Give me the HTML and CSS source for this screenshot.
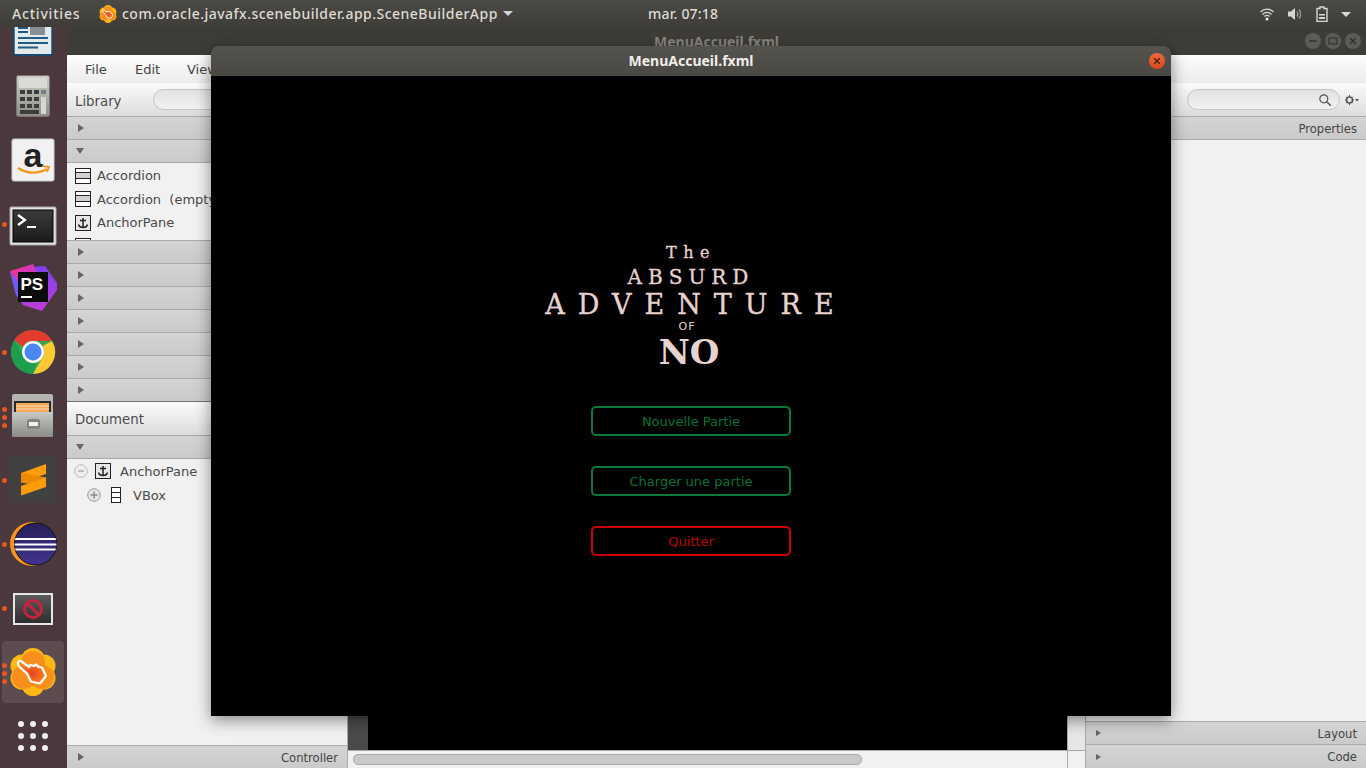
FILE: index.html
```html
<!DOCTYPE html>
<html lang="fr">
<head>
<meta charset="utf-8">
<title>MenuAccueil.fxml</title>
<link rel="stylesheet" href="styles.css">
</head>
<body>
<svg class="defs" width="0" height="0" aria-hidden="true">
  <defs>
    <radialGradient id="g-hand" cx=".5" cy=".55" r=".55"><stop offset="0" stop-color="#e8431f"/><stop offset="1" stop-color="#f98a1e"/></radialGradient>
    <symbol id="i-accordion" viewBox="0 0 16 16">
      <rect x=".5" y=".5" width="15" height="15" fill="#fff" stroke="#222"/>
      <rect x="1" y="5" width="14" height="6" fill="#d2d2d2"/>
      <path d="M1 4.500h14M1 10.500h14" stroke="#222" fill="none"/>
    </symbol>
    <symbol id="i-anchor" viewBox="0 0 16 16">
      <rect x=".5" y=".5" width="15" height="15" fill="#e6e6e6" stroke="#222"/>
      <path d="M8 3v9.500M5 5.500h6M3.500 9.500c.5 2 2.500 3 4.500 3s4-1 4.500-3" stroke="#222" stroke-width="1.500" fill="none"/>
    </symbol>
    <symbol id="i-vbox" viewBox="0 0 16 16">
      <rect x="3.500" y=".5" width="9" height="15" fill="#fff" stroke="#222"/>
      <path d="M3.500 5.500h9M3.500 10.500h9" stroke="#222" fill="none"/>
    </symbol>
    <symbol id="i-app" viewBox="0 0 48 48">
      <g fill="#fdb813">
        <circle cx="24" cy="11.500" r="11.500"/><circle cx="35" cy="18" r="11.500"/><circle cx="35" cy="30" r="11.500"/>
        <circle cx="24" cy="36.500" r="11.500"/><circle cx="13" cy="30" r="11.500"/><circle cx="13" cy="18" r="11.500"/>
      </g>
      <g fill="#f57c1f" fill-opacity=".7">
        <circle cx="24" cy="15" r="12"/><circle cx="33" cy="29" r="12"/><circle cx="15" cy="29" r="12"/>
      </g>
      <path d="M9 15.500Q9 12.500 12 13L20 19 21 17 25 18 26.500 16.500 30 19 33 19.500 37 28 31 35.500 22 33.500 18 25.500 10 18.500Z" fill="url(#g-hand)" stroke="#fff" stroke-width="2.200" stroke-linejoin="round"/>
    </symbol>
  </defs>
</svg>

<div class="desktop">
  <section class="window">
    <header class="win-title">
      <span class="win-name">MenuAccueil.fxml</span>
      <div class="win-controls">
        <span class="win-btn"><svg width="16" height="16" viewBox="0 0 16 16"><path d="M4 8h8" stroke="#2e2d2a" stroke-width="1.200"/></svg></span>
        <span class="win-btn"><svg width="16" height="16" viewBox="0 0 16 16"><rect x="4" y="5" width="8" height="6" fill="none" stroke="#2e2d2a"/></svg></span>
        <span class="win-btn"><svg width="16" height="16" viewBox="0 0 16 16"><path d="M5 5l6 6M11 5l-6 6" stroke="#2e2d2a" stroke-width="1.200"/></svg></span>
      </div>
    </header>
    <nav class="menu">
      <span class="menu-file">File</span><span class="menu-edit">Edit</span><span>View</span>
    </nav>
    <div class="work">
      <aside class="left">
        <div class="panel-head"><span class="panel-label panel-label-lib">Library</span><span class="search search-left"></span></div>
        <div class="band"><i class="tri-r"></i></div>
        <div class="band"><i class="tri-d"></i></div>
        <ul class="lib-list">
          <li><svg class="ico"><use href="#i-accordion"/></svg>Accordion</li>
          <li><svg class="ico"><use href="#i-accordion"/></svg>Accordion&nbsp; (empty)</li>
          <li><svg class="ico"><use href="#i-anchor"/></svg>AnchorPane</li>
          <li><svg class="ico"><use href="#i-accordion"/></svg>&nbsp;</li>
        </ul>
        <div class="band"><i class="tri-r"></i></div>
        <div class="band"><i class="tri-r"></i></div>
        <div class="band"><i class="tri-r"></i></div>
        <div class="band"><i class="tri-r"></i></div>
        <div class="band"><i class="tri-r"></i></div>
        <div class="band"><i class="tri-r"></i></div>
        <div class="band band-last"><i class="tri-r"></i></div>
        <div class="panel-head"><span class="panel-label">Document</span></div>
        <div class="band"><i class="tri-d"></i></div>
        <div class="tree">
          <div class="tree-row">
            <svg class="toggle" width="14" height="14" viewBox="0 0 14 14"><circle cx="7" cy="7" r="6.300" fill="#eee" stroke="#bbb"/><path d="M4 7h6" stroke="#aaa" stroke-width="1.400"/></svg>
            <svg class="ico"><use href="#i-anchor"/></svg>AnchorPane
          </div>
          <div class="tree-row tree-child">
            <svg class="toggle" width="14" height="14" viewBox="0 0 14 14"><circle cx="7" cy="7" r="6.300" fill="#e6e6e6" stroke="#999"/><path d="M3.500 7h7M7 3.500v7" stroke="#888" stroke-width="1.400"/></svg>
            <svg class="ico"><use href="#i-vbox"/></svg>VBox
          </div>
        </div>
        <div class="band band-foot"><i class="tri-r"></i><span class="band-text">Controller</span></div>
      </aside>

      <main class="center">
        <div class="stage">
          <div class="stage-side"></div>
          <div class="stage-black"></div>
          <div class="stage-end"></div>
        </div>
        <div class="scrollbar"><span class="thumb"></span><span class="corner"></span></div>
      </main>

      <aside class="right">
        <div class="panel-head panel-head-right">
          <span class="search search-right">
            <svg width="14" height="14" viewBox="0 0 14 14"><circle cx="5.800" cy="5.800" r="4" fill="none" stroke="#555" stroke-width="1.200"/><path d="M8.800 8.800l4 4" stroke="#555" stroke-width="1.500"/></svg>
          </span>
          <svg class="gear" width="14" height="10" viewBox="0 0 14 10"><circle cx="4.500" cy="5" r="3" fill="none" stroke="#555" stroke-width="1.600"/><path d="M4.500 0v2M4.500 8v2M0 5h2M7 5h2M1.300 1.800l1.300 1.300M6.400 6.900l1.300 1.300M7.700 1.800L6.400 3.100M2.600 6.900L1.300 8.200" stroke="#555"/><path d="M10 4h4l-2 2.500z" fill="#555"/></svg>
        </div>
        <div class="band band-right"><span class="band-text">Properties</span></div>
        <div class="right-body"></div>
        <div class="band band-right"><i class="tri-r"></i><span class="band-text">Layout</span></div>
        <div class="band band-right band-foot-r"><i class="tri-r"></i><span class="band-text">Code</span></div>
      </aside>
    </div>
  </section>

  <nav class="dock">
    <div class="dock-item">
      <svg width="48" height="48" viewBox="0 0 48 48"><rect x="4.800" y="1" width="38.400" height="46" rx="1" fill="#e4e9ec" stroke="#174a6e" stroke-width="1.800"/><path d="M9 20h10M9 24h10M9 30h30M9 35h30M9 39.500h20" stroke="#1f5b86" stroke-width="1.800"/><rect x="21" y="10" width="15" height="17" fill="#868e98"/></svg>
    </div>
    <div class="dock-item">
      <svg width="48" height="48" viewBox="0 0 48 48"><defs><linearGradient id="g-calc" x1="0" y1="0" x2="0" y2="1"><stop offset="0" stop-color="#cfcfc9"/><stop offset="1" stop-color="#8d8d88"/></linearGradient></defs><rect x="7.500" y="3.500" width="33" height="41" rx="2" fill="url(#g-calc)" stroke="#777"/><rect x="10" y="6" width="28" height="10" fill="#d9dcd4"/><g fill="#3d3d3b"><rect x="11" y="18" width="5" height="4"/><rect x="18" y="18" width="5" height="4"/><rect x="25" y="18" width="5" height="4"/><rect x="11" y="25" width="5" height="4"/><rect x="18" y="25" width="5" height="4"/><rect x="25" y="25" width="5" height="4"/><rect x="11" y="32" width="5" height="4"/><rect x="18" y="32" width="5" height="4"/><rect x="25" y="32" width="5" height="4"/><rect x="11" y="38" width="19" height="4"/></g><rect x="32" y="18" width="5" height="4" fill="#6f7f85"/><rect x="32" y="25" width="5" height="17" fill="#d5d8d2"/></svg>
    </div>
    <div class="dock-item">
      <svg width="48" height="48" viewBox="0 0 48 48"><rect x="3" y="3" width="42" height="42" rx="2" fill="#f1f1f1" stroke="#ccc"/><text x="24" y="31" text-anchor="middle" class="amazon-a">a</text><path d="M9 32c9 6 20 6 29 1" fill="none" stroke="#f7981d" stroke-width="2.400"/><path d="M34 30l6 1-2 5" fill="none" stroke="#f7981d" stroke-width="1.800"/></svg>
    </div>
    <div class="dock-item">
      <i class="pip pip-1"></i>
      <svg width="48" height="48" viewBox="0 0 48 48"><defs><linearGradient id="g-term" x1="0" y1="0" x2="0" y2="1"><stop offset="0" stop-color="#3b3b3b"/><stop offset="1" stop-color="#1b1b1b"/></linearGradient></defs><rect x="1" y="7" width="46" height="38" rx="1" fill="#e2e2e2" stroke="#aaa"/><rect x="4" y="10" width="40" height="32" fill="url(#g-term)" stroke="#000"/><path d="M9 15l7 5-7 5" fill="none" stroke="#fff" stroke-width="2.200"/><path d="M18 27h9" stroke="#fff" stroke-width="2"/></svg>
    </div>
    <div class="dock-item">
      <svg width="48" height="48" viewBox="0 0 48 48"><defs><linearGradient id="g-ps" x1="0" y1="0" x2="1" y2="1"><stop offset="0" stop-color="#f5338e"/><stop offset="1" stop-color="#a63cf2"/></linearGradient><linearGradient id="g-ps2" x1="0" y1="0" x2="0" y2="1"><stop offset="0" stop-color="#7b3ff2"/><stop offset="1" stop-color="#c23bd8"/></linearGradient></defs><path d="M22 3L36 2 48 19 48 26 33 47 14 41z" fill="url(#g-ps2)"/><path d="M1 7L24 0 30 12 14 41 7 31z" fill="url(#g-ps)"/><path d="M1 7L7 31 14 41 12 22z" fill="#6d5cf5"/><rect x="9" y="8" width="30" height="30" fill="#0c0c0c"/><text x="11.500" y="26" class="ps-text">PS</text><rect x="12" y="32" width="11" height="2" fill="#fff"/></svg>
    </div>
    <div class="dock-item">
      <i class="pip pip-1"></i>
      <svg width="48" height="48" viewBox="0 0 48 48"><circle cx="24" cy="24" r="22" fill="#34a853"/><path d="M24 2a22 22 0 0 1 19.100 11H24a11 11 0 0 0-10 6L5.500 12A22 22 0 0 1 24 2z" fill="#e33b2e"/><path d="M43.100 13A22 22 0 0 1 24 46l9.500-16.500A11 11 0 0 0 33.500 18z" fill="#fdc933"/><path d="M24 46a22 22 0 0 1-18.500-34l9.500 16.500a11 11 0 0 0 12 6z" fill="#1e9e4c"/><circle cx="24" cy="24" r="11" fill="#fff"/><circle cx="24" cy="24" r="8.500" fill="#4a87f0"/></svg>
    </div>
    <div class="dock-item">
      <i class="pip pip-3a"></i><i class="pip pip-3b"></i><i class="pip pip-3c"></i>
      <svg width="48" height="48" viewBox="0 0 48 48"><defs><linearGradient id="g-fc" x1="0" y1="0" x2="0" y2="1"><stop offset="0" stop-color="#c8c8c4"/><stop offset="1" stop-color="#8a8a86"/></linearGradient></defs><rect x="3" y="2" width="41" height="42" rx="2" fill="#b4b4b0"/><rect x="5" y="9" width="37" height="12" fill="#2a2a28"/><rect x="7" y="11" width="33" height="10" fill="#f2a65a"/><path d="M7 14h33M7 17h33" stroke="#fbe2bd"/><rect x="3" y="20" width="41" height="25" rx="1" fill="url(#g-fc)"/><rect x="18" y="27" width="13" height="10" rx="2" fill="#83837f"/><rect x="20" y="30" width="9" height="4" fill="#f0f0ee"/></svg>
    </div>
    <div class="dock-item">
      <i class="pip pip-1"></i>
      <svg width="48" height="48" viewBox="0 0 48 48"><rect width="48" height="47" rx="4" fill="#414141"/><path d="M12 17L37 8V18L12 26.500Z" fill="#ff9c0a"/><path d="M12 17V26.500L37 31V21.500Z" fill="#ef8a00"/><path d="M37 21.500V31L12 39.500V30Z" fill="#ff9c0a"/></svg>
    </div>
    <div class="dock-item">
      <i class="pip pip-1"></i>
      <svg width="48" height="48" viewBox="0 0 48 48"><defs><linearGradient id="g-ec" x1="0" y1="0" x2="0" y2="1"><stop offset="0" stop-color="#272056"/><stop offset="1" stop-color="#40348f"/></linearGradient><clipPath id="c-ec"><circle cx="26.500" cy="24" r="21"/></clipPath></defs><circle cx="23" cy="24" r="22" fill="#f7941e"/><circle cx="26.500" cy="24" r="21" fill="url(#g-ec)" stroke="#111"/><path d="M4 19h44M4 24.500h44M4 29.500h44" stroke="#fff" stroke-width="2" clip-path="url(#c-ec)"/></svg>
    </div>
    <div class="dock-item">
      <i class="pip pip-1"></i>
      <svg width="48" height="48" viewBox="0 0 48 48"><defs><linearGradient id="g-no" x1="0" y1="0" x2="0" y2="1"><stop offset="0" stop-color="#5c5c5c"/><stop offset="1" stop-color="#2c2c2c"/></linearGradient></defs><rect x="5" y="10" width="38" height="30" fill="url(#g-no)" stroke="#e6e6e6" stroke-width="2"/><circle cx="24" cy="25" r="8.500" fill="none" stroke="#c3243f" stroke-width="3"/><path d="M18 19l12 12" stroke="#c3243f" stroke-width="3"/></svg>
    </div>
    <div class="dock-item dock-active">
      <i class="pip pip-3a"></i><i class="pip pip-3b"></i><i class="pip pip-3c"></i>
      <svg width="48" height="48"><use href="#i-app"/></svg>
    </div>
    <div class="dock-item">
      <div class="dots"><i></i><i></i><i></i><i></i><i></i><i></i><i></i><i></i><i></i></div>
    </div>
  </nav>

  <header class="topbar">
    <span class="activities">Activities</span>
    <svg class="app-icon" width="18" height="18"><use href="#i-app"/></svg>
    <span class="app-name">com.oracle.javafx.scenebuilder.app.SceneBuilderApp</span>
    <i class="caret"></i>
    <span class="clock">mar. 07:18</span>
    <div class="tray">
      <svg width="16" height="16" viewBox="0 0 16 16"><path d="M1.500 6a9 9 0 0 1 13 0M3.500 8.500a6 6 0 0 1 9 0M5.500 10.500a3.500 3.500 0 0 1 5 0" fill="none" stroke="#d8d6d2" stroke-width="1.300"/><circle cx="8" cy="13" r="1.500" fill="#eee"/></svg>
      <svg width="16" height="16" viewBox="0 0 16 16"><path d="M1 5.500h3L8 2v12L4 10.500H1z" fill="#d8d6d2"/><path d="M10 5.500a4 4 0 0 1 0 5M12 3.500a7 7 0 0 1 0 9" fill="none" stroke="#a8a6a2" stroke-width="1.200"/></svg>
      <svg width="14" height="16" viewBox="0 0 14 16"><path d="M5 1h4v1.500h3v13H2v-13h3z" fill="none" stroke="#d8d6d2" stroke-width="1.400"/><path d="M4 8h6v1.500H4zM4 11h6v2H4z" fill="#d8d6d2"/></svg>
      <i class="caret"></i>
    </div>
  </header>

  <section class="dialog">
    <header class="dialog-title">
      <span>MenuAccueil.fxml</span>
      <span class="dialog-close"><svg width="16" height="16" viewBox="0 0 16 16"><path d="M5.200 5.200l5.600 5.600M10.800 5.200l-5.600 5.600" stroke="#3c2018" stroke-width="1.300"/></svg></span>
    </header>
    <div class="game">
      <h1 class="logo">
        <span class="l-the">The</span>
        <span class="l-absurd">ABSURD</span>
        <span class="l-adventure">ADVENTURE</span>
        <span class="l-of">OF</span>
        <span class="l-no">NO</span>
      </h1>
      <button class="game-btn">Nouvelle Partie</button>
      <button class="game-btn">Charger une partie</button>
      <button class="game-btn game-btn-red">Quitter</button>
    </div>
  </section>
</div>
</body>
</html>
```
FILE: styles.css
```css
* { box-sizing: border-box; }
html, body { margin: 0; padding: 0; height: 100%; overflow: hidden; background: #3c3b37; }
.defs { position: absolute; }
.desktop { position: relative; width: 1366px; height: 768px; overflow: hidden; font-family: "DejaVu Sans", sans-serif; font-size: 13px; color: #4a4a4a; }

/* top bar */
.topbar { position: absolute; left: 0; top: 0; width: 1366px; height: 27px; display: flex; align-items: center; background: linear-gradient(#4b4a45, #3e3d39); color: #dfdbd2; font-family: "Noto Sans", sans-serif; font-size: 14px; font-weight: 500; }
.activities { margin-left: 12px; width: 87px; letter-spacing: .8px; }
.app-icon { flex: none; }
.app-name { margin-left: 5px; width: 381px; white-space: nowrap; letter-spacing: .48px; }
.caret { display: block; width: 0; height: 0; border-left: 5px solid transparent; border-right: 5px solid transparent; border-top: 5px solid #d8d6d2; }
.clock { margin-left: 135px; width: 500px; letter-spacing: .2px; }
.tray { position: absolute; right: 15px; top: 6px; display: flex; align-items: center; gap: 12px; }

/* scene builder window */
.window { position: absolute; left: 67px; top: 27px; width: 1299px; height: 741px; display: flex; flex-direction: column; background: #f1f1f1; }
.win-title { flex: none; height: 28px; position: relative; background: #3d3c37; display: flex; align-items: center; justify-content: center; }
.win-name { color: #87857f; font-family: "Noto Sans", sans-serif; font-weight: 700; font-size: 14px; }
.win-controls { position: absolute; right: 5px; top: 6px; display: flex; gap: 4px; }
.win-btn { width: 16px; height: 16px; border-radius: 50%; background: #5d5b55; display: block; }
.menu { flex: none; height: 28px; display: flex; align-items: center; padding: 1px 0 0 18px; background: linear-gradient(#fdfdfd, #ececec); color: #444; }
.menu-file { width: 50px; }
.menu-edit { width: 52px; }
.work { flex: 1; display: flex; min-height: 0; }
.left { flex: none; width: 281px; display: flex; flex-direction: column; border-right: 1px solid #aaa; }
.panel-head { flex: none; height: 34px; display: flex; align-items: center; padding-left: 8px; background: linear-gradient(#fbfbfb, #dcdcdc); border-bottom: 1px solid #a9a9a9; }
.panel-label { color: #4a4a4a; width: 78px; font-size: 13.300px; padding-top: 2px; }
.panel-label-lib { padding-top: 4px; }
.search { display: flex; align-items: center; justify-content: flex-end; height: 21px; border: 1px solid #c4c4c4; border-radius: 11px; background: linear-gradient(#e2e2e2, #f2f2f2); }
.search-left { width: 180px; }
.search-right { width: 153px; padding-right: 7px; }
.band { flex: none; height: 23px; display: flex; align-items: center; padding-left: 9px; background: linear-gradient(#d4d4d4, #cacaca); border-bottom: 1px solid #a9a9a9; color: #444; }
.band-text { font-size: 11.600px; padding-top: 1px; }
.band-last { border-bottom-color: #707070; }
.tri-r { display: block; width: 0; height: 0; border-top: 4px solid transparent; border-bottom: 4px solid transparent; border-left: 6px solid #666; margin-left: 2px; }
.tri-d { display: block; width: 0; height: 0; border-left: 4px solid transparent; border-right: 4px solid transparent; border-top: 6px solid #666; }
.lib-list { flex: none; height: 78px; margin: 0; padding: 1px 0 0 8px; list-style: none; overflow: hidden; background: #f1f1f1; border-bottom: 1px solid #a9a9a9; }
.lib-list li { height: 23.500px; display: flex; align-items: center; gap: 6px; white-space: nowrap; }
.ico { width: 16px; height: 16px; flex: none; }
.tree { flex: 1; padding: 0 0 0 7px; background: #f1f1f1; }
.tree-row { height: 24px; display: flex; align-items: center; }
.tree-row .toggle { flex: none; margin-right: 7px; }
.tree-row .ico { margin-right: 9px; }
.tree-child { padding-left: 13px; }
.tree-child .toggle { margin-right: 7px; }
.band-foot { height: 23px; border-bottom: 0; border-top: 1px solid #a9a9a9; justify-content: space-between; padding-right: 9px; }

.center { flex: 1; min-width: 0; display: flex; flex-direction: column; }
.stage { flex: 1; display: flex; min-height: 0; }
.stage-side { flex: none; width: 20px; background: #4a4a4a; }
.stage-black { flex: 1; background: #000; }
.stage-end { flex: none; width: 18px; background: #e6e6e6; border-left: 1px solid #aaa; }
.scrollbar { flex: none; height: 18px; display: flex; align-items: center; justify-content: space-between; padding-left: 5px; background: #f1f1f1; border-top: 1px solid #aaa; }
.thumb { display: block; width: 509px; height: 11px; border-radius: 5px; background: #c9c9c9; border: 1px solid #aaa; }
.corner { display: block; width: 18px; height: 18px; border-left: 1px solid #aaa; }

.right { flex: none; width: 281px; display: flex; flex-direction: column; border-left: 1px solid #aaa; }
.panel-head-right { padding-left: 101px; gap: 5px; }
.gear { flex: none; }
.band-right { justify-content: flex-end; padding-right: 9px; padding-left: 8px; position: relative; }
.band-right .tri-r { margin-right: auto; border-top-width: 3px; border-bottom-width: 3px; border-left-width: 5px; }
.right-body { flex: 1; background: #f1f1f1; border-bottom: 1px solid #a9a9a9; }
.band-foot-r { border-bottom: 0; }

/* dock */
.dock { position: absolute; left: 0; top: 0; width: 67px; height: 768px; background: #4a383c; display: flex; flex-direction: column; }
.dock-item { flex: none; width: 66px; height: 64px; display: flex; align-items: center; justify-content: center; position: relative; }
.dock-item > svg { display: block; }
.dock-active::before { content: ""; position: absolute; left: 2px; top: 1px; width: 62px; height: 62px; border-radius: 4px; background: rgba(255, 255, 255, .1); }
.dock-active > svg { position: relative; }
.pip { position: absolute; left: 2px; width: 5px; height: 5px; border-radius: 50%; background: #e9561f; z-index: 1; }
.pip-1 { top: 30px; }
.pip-3a { top: 23px; }
.pip-3b { top: 31px; }
.pip-3c { top: 39px; }
.dots { width: 30px; display: grid; grid-template-columns: repeat(3, 6px); justify-content: space-between; row-gap: 6px; }
.dots i { display: block; width: 6px; height: 6px; border-radius: 50%; background: #eee; }
.amazon-a { font-family: "Liberation Sans", sans-serif; font-weight: 700; font-size: 34px; fill: #222; }
.ps-text { font-family: "Liberation Sans", sans-serif; font-weight: 700; font-size: 17px; fill: #fff; }

/* dialog */
.dialog { position: absolute; left: 211px; top: 46px; width: 960px; height: 670px; display: flex; flex-direction: column; background: #000; border-radius: 7px 7px 0 0; box-shadow: 0 4px 16px rgba(0, 0, 0, .45); }
.dialog-title { flex: none; height: 30px; padding-bottom: 1px; position: relative; display: flex; align-items: center; justify-content: center; border-radius: 7px 7px 0 0; background: linear-gradient(#55534d, #4a4843); color: #f0eeea; font-family: "Noto Sans", sans-serif; font-weight: 700; font-size: 14px; }
.dialog-close { position: absolute; right: 6px; top: 7px; width: 16px; height: 16px; border-radius: 50%; background: linear-gradient(#f0693a, #d94a1c); display: block; }
.game { flex: 1; display: flex; flex-direction: column; align-items: center; padding-top: 165px; gap: 30px; }
.logo { margin: 0 0 5px; display: flex; flex-direction: column; align-items: center; font-family: "DejaVu Serif", serif; font-weight: 400; color: #e6d3d0; white-space: nowrap; height: 130px; -webkit-text-stroke: .35px #e6d3d0; }
.logo span { display: block; }
.l-the { font-size: 16px; letter-spacing: 6.500px; line-height: 24px; height: 24px; }
.l-absurd { font-size: 20px; letter-spacing: 6px; line-height: 24px; height: 24px; }
.l-adventure { font-size: 27px; letter-spacing: 13px; line-height: 32px; height: 32px; margin-right: -10px; }
.l-of { font-family: "DejaVu Sans", sans-serif; font-size: 11px; font-weight: 400; line-height: 12px; height: 12px; letter-spacing: 1px; margin-right: 8px; -webkit-text-stroke: 0; }
.l-no { font-size: 34px; font-weight: 700; line-height: 38px; height: 38px; margin-right: 4px; -webkit-text-stroke: 0; }
.game-btn { display: block; width: 200px; height: 30px; padding: 0; border: 2px solid #0a7a3a; border-radius: 5px; background: #000; color: #0a7236; font-family: "DejaVu Sans", sans-serif; font-size: 13px; }
.game-btn-red { border-color: #cc0000; color: #bb0000; }
```
